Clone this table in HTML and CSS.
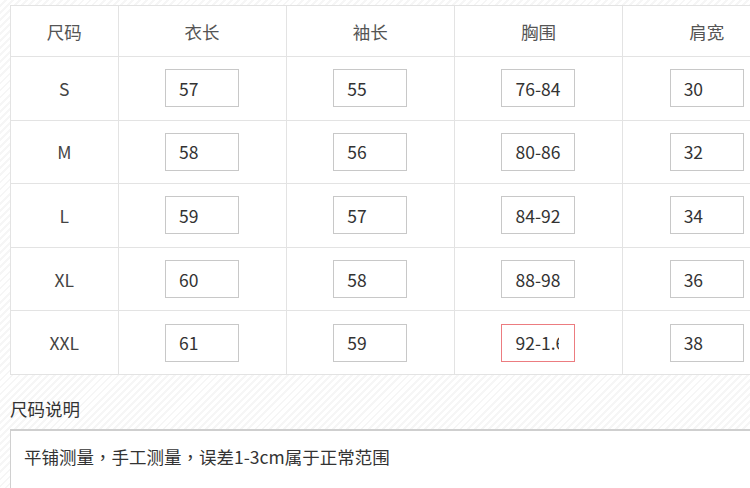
FILE: index.html
```html
<!DOCTYPE html>
<html lang="zh-CN">
<head>
<meta charset="utf-8">
<title>尺码表</title>
<link rel="stylesheet" href="styles.css">
</head>
<body>
<div class="page">
  <table class="size-table">
    <colgroup>
      <col class="c-size"><col class="c-val"><col class="c-val"><col class="c-val"><col class="c-val">
    </colgroup>
    <thead>
      <tr><th>尺码</th><th>衣长</th><th>袖长</th><th>胸围</th><th>肩宽</th></tr>
    </thead>
    <tbody>
      <tr><td>S</td><td><input class="cell-input" value="57"></td><td><input class="cell-input" value="55"></td><td><input class="cell-input" value="76-84"></td><td><input class="cell-input" value="30"></td></tr>
      <tr><td>M</td><td><input class="cell-input" value="58"></td><td><input class="cell-input" value="56"></td><td><input class="cell-input" value="80-86"></td><td><input class="cell-input" value="32"></td></tr>
      <tr><td>L</td><td><input class="cell-input" value="59"></td><td><input class="cell-input" value="57"></td><td><input class="cell-input" value="84-92"></td><td><input class="cell-input" value="34"></td></tr>
      <tr><td>XL</td><td><input class="cell-input" value="60"></td><td><input class="cell-input" value="58"></td><td><input class="cell-input" value="88-98"></td><td><input class="cell-input" value="36"></td></tr>
      <tr><td>XXL</td><td><input class="cell-input" value="61"></td><td><input class="cell-input" value="59"></td><td><input class="cell-input is-error" value="92-1.6cm"></td><td><input class="cell-input" value="38"></td></tr>
    </tbody>
  </table>
  <div class="note-label">尺码说明</div>
  <div class="note-box">平铺测量<span class="punct" lang="zh-TW">，</span>手工测量<span class="punct" lang="zh-TW">，</span>误差1-3cm属于正常范围</div>
</div>
</body>
</html>
```
FILE: styles.css
```css
html, body {
  margin: 0;
  padding: 0;
  overflow: hidden;
}
body {
  font-family: "Noto Sans CJK SC", "Noto Sans", sans-serif;
  color: #333;
  background: repeating-linear-gradient(135deg, #ffffff 0, #ffffff 3px, #f6f6f6 3px, #f6f6f6 5px);
}
.page {
  width: 900px;
  height: 488px;
  padding: 5px 0 0 10px;
  box-sizing: border-box;
  overflow: hidden;
}
.size-table {
  border-collapse: collapse;
  table-layout: fixed;
  width: 780px;
  background: #fff;
  border: 1px solid #e3e3e3;
}
.c-size { width: 107.5px; }
.c-val { width: 168.2px; }
.size-table th,
.size-table td {
  border: 1px solid #e3e3e3;
  text-align: center;
  vertical-align: middle;
  padding: 0;
  font-size: 17.5px;
  font-weight: normal;
  color: #444;
}
.size-table thead tr { height: 51px; }
.size-table tbody tr { height: 63.6px; }
.size-table th { color: #555; }
.cell-input {
  display: block;
  margin: 0 auto;
  width: 74px;
  height: 38px;
  box-sizing: border-box;
  border: 1px solid #c8c8c8;
  padding: 0 4px 0 13px;
  font-family: "Noto Sans CJK SC", "Noto Sans", sans-serif;
  font-size: 17.5px;
  color: #333;
  background: #fff;
  outline: none;
}
.cell-input.is-error {
  border-color: #ec7c80;
  padding-right: 15px;
}
.note-label {
  margin-top: 22px;
  font-size: 17.5px;
  line-height: 24px;
  color: #333;
}
.note-box {
  margin-top: 8px;
  height: 80px;
  width: 900px;
  box-sizing: border-box;
  background: #fff;
  border: 1px solid #d0d0d0;
  border-top: 2px solid #cfcfcf;
  padding: 14px 13px;
  font-size: 17.5px;
  line-height: 24px;
  color: #333;
}
.punct {
  font-family: "Noto Sans CJK TC", "Noto Sans CJK SC", sans-serif;
}
```
